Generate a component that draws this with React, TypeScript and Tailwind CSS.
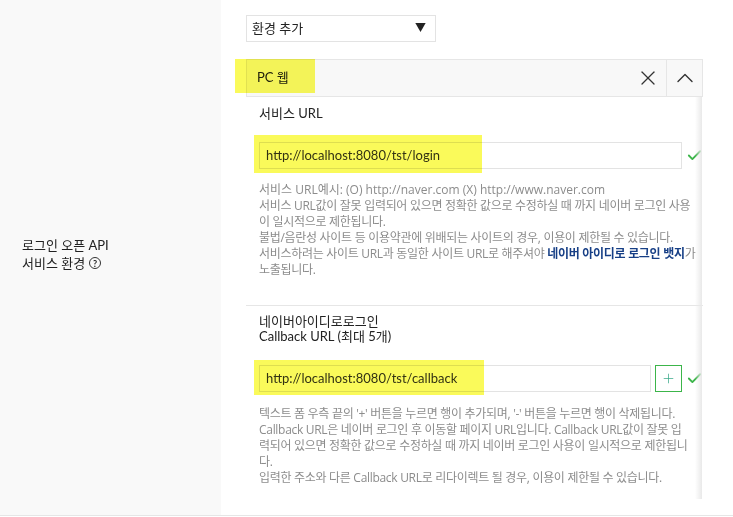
import { X, ChevronUp, Check, Plus } from 'lucide-react'

const font = { fontFamily: "Lato, 'Noto Sans CJK KR', sans-serif" }

function Marker({ className }: { className: string }) {
  // yellow highlighter annotation drawn over the screenshot
  return <div className={`pointer-events-none absolute bg-[#fafa5a] mix-blend-multiply ${className}`} />
}

function UrlRow({ value, withPlus }: { value: string; withPlus?: boolean }) {
  return (
    <div className="relative flex items-center">
      <div
        className={`h-[27px] border border-[#e3e3e3] bg-white pl-[6px] flex items-center text-[13px] text-[#333] ${
          withPlus ? 'w-[395px]' : 'w-[426px]'
        }`}
      >
        {value}
      </div>
      {withPlus && (
        <button className="ml-[4px] w-[27px] h-[27px] border border-[#3cb54a] flex items-center justify-center">
          <Plus size={15} strokeWidth={1.2} className="text-[#3aa98a]" />
        </button>
      )}
      <Check size={17} strokeWidth={2.6} className="ml-[4px] text-[#3cb54a] shrink-0" />
    </div>
  )
}

const help = "font-['Open_Sans','Noto_Sans_CJK_KR',sans-serif] text-[12px] leading-[16px] text-[#8c8c8c] tracking-[-0.3px] whitespace-nowrap"

export default function App() {
  return (
    <div style={font} className="w-[733px] h-[517px] bg-white overflow-hidden">
      <div className="flex h-[516px] border-b border-[#e6e6e6]">
        {/* label column */}
        <div className="w-[221px] bg-[#f9f9f9] pl-[22px] pt-[236px] text-[13px] leading-[18px] text-[#222]">
          <p>로그인 오픈 API</p>
          <p className="flex items-center">
            서비스 환경
            <span className="ml-[4px] w-[12px] h-[12px] rounded-full border border-[#333] text-[9px] leading-none flex items-center justify-center font-bold">
              ?
            </span>
          </p>
        </div>

        {/* settings column */}
        <div className="relative flex-1 pl-[25px] pt-[15px]">
          <div className="w-[190px] h-[27px] border border-[#e3e3e3] flex items-center justify-between pl-[5px] pr-[9px] text-[13px] text-[#222]">
            <span>환경 추가</span>
            <span className="text-[11px]">▼</span>
          </div>

          <div className="mt-[17px] w-[457px]">
            <div className="h-[38px] border border-[#e6e6e6] bg-[#f8f8f8] flex items-center">
              <span className="flex-1 pl-[10px] text-[13px] text-[#222]">PC 웹</span>
              <button className="w-[36px] h-full flex items-center justify-center">
                <X size={24} strokeWidth={1.3} className="text-[#333]" />
              </button>
              <button className="w-[36px] h-full border-l border-[#e6e6e6] flex items-center justify-center">
                <ChevronUp size={28} strokeWidth={1.2} className="text-[#333]" />
              </button>
            </div>

            <div className="relative h-[402px] overflow-hidden">
              <div className="pl-[13px] pt-[7px] pb-[27px] border-b border-[#e6e6e6]">
                <p className="text-[13px] leading-[18px] text-[#222]">서비스 URL</p>
                <div className="mt-[20px]">
                  <UrlRow value="http://localhost:8080/tst/login" />
                </div>
                <p className={`mt-[13px] ${help}`}>
                  <span className="tracking-normal">서비스 URL예시: (O) http://naver.com (X) http://www.naver.com</span>
                  <br />
                  서비스 URL값이 잘못 입력되어 있으면 정확한 값으로 수정하실 때 까지 네이버 로그인 사용
                  <br />
                  이 일시적으로 제한됩니다.
                  <br />
                  불법/음란성 사이트 등 이용약관에 위배되는 사이트의 경우, 이용이 제한될 수 있습니다.
                  <br />
                  서비스하려는 사이트 URL과 동일한 사이트 URL로 해주셔야{' '}
                  <b className="text-[#173f86]">네이버 아이디로 로그인 뱃지</b>가
                  <br />
                  노출됩니다.
                </p>
              </div>

              <div className="pl-[13px] pt-[8px]">
                <p className="text-[13px] leading-[15px] text-[#222]">
                  네이버아이디로로그인
                  <br />
                  Callback URL (최대 5개)
                </p>
                <div className="mt-[21px]">
                  <UrlRow value="http://localhost:8080/tst/callback" withPlus />
                </div>
                <p className={`mt-[14px] ${help}`}>
                  텍스트 폼 우측 끝의 '+' 버튼을 누르면 행이 추가되며, '-' 버튼을 누르면 행이 삭제됩니다.
                  <br />
                  Callback URL은 네이버 로그인 후 이동할 페이지 URL입니다. Callback URL값이 잘못 입
                  <br />
                  력되어 있으면 정확한 값으로 수정하실 때 까지 네이버 로그인 사용이 일시적으로 제한됩니
                  <br />
                  다.
                  <br />
                  입력한 주소와 다른 Callback URL로 리다이렉트 될 경우, 이용이 제한될 수 있습니다.
                </p>
              </div>

              {/* right scroll shadow */}
              <div className="pointer-events-none absolute right-[1px] top-0 bottom-0 w-[7px] bg-gradient-to-r from-transparent to-[#e9e9e9]" />
            </div>
          </div>

          <Marker className="left-[14px] top-[59px] w-[80px] h-[34px]" />
          <Marker className="left-[33px] top-[135px] w-[228px] h-[38px]" />
          <Marker className="left-[33px] top-[360px] w-[230px] h-[35px]" />
        </div>
      </div>
    </div>
  )
}
